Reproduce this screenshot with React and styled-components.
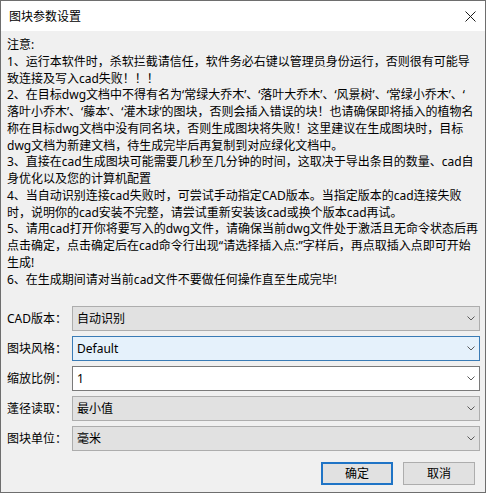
import React from "react";
import styled, { createGlobalStyle, css } from "styled-components";

const Global = createGlobalStyle`
  html, body {
    margin: 0;
    padding: 0;
    background: #ffffff;
  }
  * { box-sizing: border-box; }
`;

const FONT = `"Noto Sans", "Noto Sans CJK SC", sans-serif`;

const Window = styled.div`
  width: 486px;
  height: 493px;
  border: 1px solid #6e6e6e;
  display: flex;
  flex-direction: column;
  font-family: ${FONT};
  font-size: 12px;
  color: #000;
  background: #f0f0f0;
`;

const TitleBar = styled.div`
  height: 30px;
  flex: none;
  background: #ffffff;
  display: flex;
  align-items: center;
  justify-content: space-between;
  padding: 1px 9px 0 8px;
`;

const Title = styled.span`
  font-size: 12px;
  line-height: 16px;
`;

const CloseButton = styled.span`
  width: 12px;
  height: 12px;
  display: flex;
  align-items: center;
  justify-content: center;
`;

const Body = styled.div`
  flex: 1;
  display: flex;
  flex-direction: column;
  padding: 6px 5px 0 6px;
`;

const Notice = styled.div`
  line-height: 16.75px;
`;

const Line = styled.div`
  white-space: nowrap;
`;

const Form = styled.div`
  margin-top: 18px;
  display: flex;
  flex-direction: column;
  gap: 5px;
`;

const Row = styled.div`
  display: grid;
  grid-template-columns: 65px 1fr;
  align-items: center;
`;

const Label = styled.span`
  white-space: nowrap;
  line-height: 16px;
`;

const comboTones = {
  plain: css`
    background: #e1e1e1;
    border-color: #adadad;
  `,
  hover: css`
    background: #e5f1fb;
    border-color: #3a7bb5;
  `,
  edit: css`
    background: #ffffff;
    border-color: #7a7a7a;
  `,
};

const Combo = styled.div`
  height: 25px;
  border: 1px solid;
  display: flex;
  align-items: center;
  justify-content: space-between;
  padding: 0 4px 0 4px;
  ${({ $tone }) => comboTones[$tone]}
`;

const ComboText = styled.span`
  line-height: 16px;
`;

const Buttons = styled.div`
  margin-top: 11px;
  display: flex;
  justify-content: flex-end;
  gap: 10px;
  padding-right: 5px;
`;

const Button = styled.div`
  width: 72px;
  height: 23px;
  display: flex;
  align-items: center;
  justify-content: center;
  background: #e1e1e1;
  border: ${({ $primary }) => ($primary ? "2px solid #1f74c6" : "1px solid #adadad")};
  line-height: 16px;
`;

const Chevron = () => (
  <svg width="8" height="5" viewBox="0 0 8 5" fill="none">
    <polyline points="0.5,0.5 4,4 7.5,0.5" stroke="#5a5a5a" strokeWidth="1" />
  </svg>
);

const CloseIcon = () => (
  <svg width="11" height="11" viewBox="0 0 11 11" fill="none">
    <path d="M0.5 0.5 L10.5 10.5 M10.5 0.5 L0.5 10.5" stroke="#1a1a1a" strokeWidth="1" />
  </svg>
);

const noticeLines = [
  "注意:",
  "1、运行本软件时，杀软拦截请信任，软件务必右键以管理员身份运行，否则很有可能导",
  "致连接及写入cad失败！！！",
  "2、在目标dwg文档中不得有名为‘常绿大乔木’、‘落叶大乔木’、‘风景树’、‘常绿小乔木’、‘",
  "落叶小乔木’、‘藤本’、‘灌木球’的图块，否则会插入错误的块！也请确保即将插入的植物名",
  "称在目标dwg文档中没有同名块，否则生成图块将失败！这里建议在生成图块时，目标",
  "dwg文档为新建文档，待生成完毕后再复制到对应绿化文档中。",
  "3、直接在cad生成图块可能需要几秒至几分钟的时间，这取决于导出条目的数量、cad自",
  "身优化以及您的计算机配置",
  "4、当自动识别连接cad失败时，可尝试手动指定CAD版本。当指定版本的cad连接失败",
  "时，说明你的cad安装不完整，请尝试重新安装该cad或换个版本cad再试。",
  "5、请用cad打开你将要写入的dwg文件，请确保当前dwg文件处于激活且无命令状态后再",
  "点击确定，点击确定后在cad命令行出现“请选择插入点:”字样后，再点取插入点即可开始",
  "生成!",
  "6、在生成期间请对当前cad文件不要做任何操作直至生成完毕!",
];

const fields = [
  { label: "CAD版本：", value: "自动识别", tone: "plain" },
  { label: "图块风格：", value: "Default", tone: "hover" },
  { label: "缩放比例：", value: "1", tone: "edit" },
  { label: "蓬径读取：", value: "最小值", tone: "plain" },
  { label: "图块单位：", value: "毫米", tone: "plain" },
];

export default function App() {
  return (
    <>
      <Global />
      <Window>
        <TitleBar>
          <Title>图块参数设置</Title>
          <CloseButton>
            <CloseIcon />
          </CloseButton>
        </TitleBar>
        <Body>
          <Notice>
            {noticeLines.map((text, i) => (
              <Line key={i}>{text}</Line>
            ))}
          </Notice>
          <Form>
            {fields.map((f) => (
              <Row key={f.label}>
                <Label>{f.label}</Label>
                <Combo $tone={f.tone}>
                  <ComboText>{f.value}</ComboText>
                  <Chevron />
                </Combo>
              </Row>
            ))}
          </Form>
          <Buttons>
            <Button $primary>确定</Button>
            <Button>取消</Button>
          </Buttons>
        </Body>
      </Window>
    </>
  );
}
